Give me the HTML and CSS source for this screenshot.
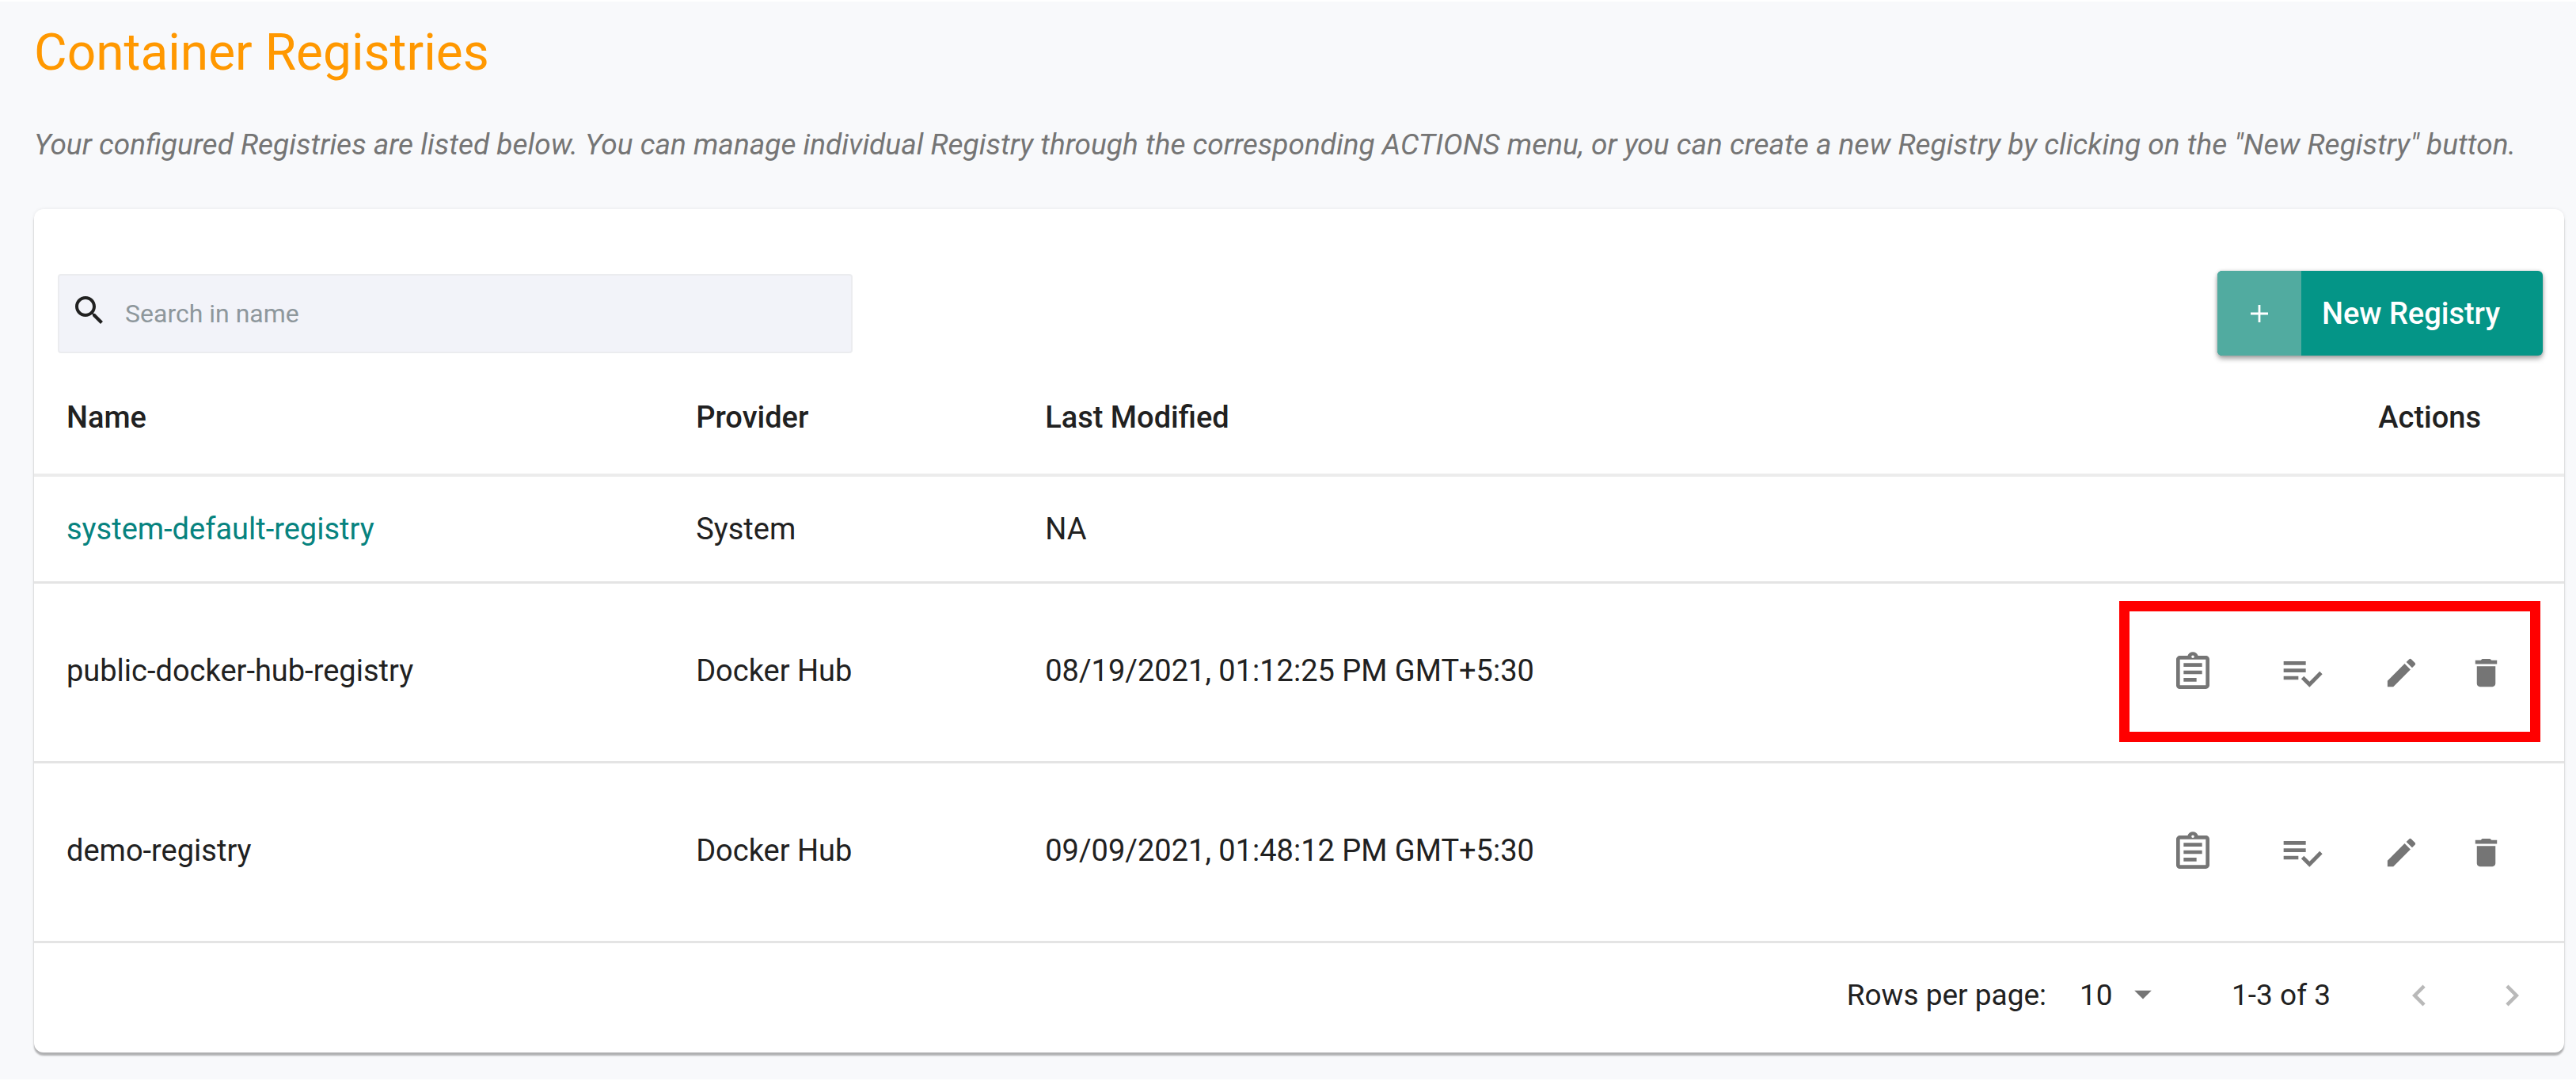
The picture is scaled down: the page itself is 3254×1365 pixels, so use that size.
FILE: index.html
```html
<!DOCTYPE html>
<html lang="en">
<head>
  <meta charset="UTF-8">
  <meta name="viewport" content="width=device-width, initial-scale=1.0">
  <title>Container Registries</title>
  <link rel="stylesheet" href="styles.css">
</head>
<body>

  <!-- icon sprite -->
  <svg class="sprite" aria-hidden="true">
    <symbol id="i-search" viewBox="0 0 24 24"><path d="M15.5 14h-.79l-.28-.27C15.41 12.59 16 11.11 16 9.5 16 5.91 13.09 3 9.5 3S3 5.91 3 9.5 5.91 16 9.5 16c1.61 0 3.09-.59 4.23-1.57l.27.28v.79l5 4.99L20.49 19l-4.99-5zm-6 0C7.01 14 5 11.99 5 9.5S7.01 5 9.5 5 14 7.01 14 9.5 11.99 14 9.5 14z"/></symbol>
    <symbol id="i-plus" viewBox="0 0 24 24"><path d="M10.6 1h2.8v9.6H23v2.8h-9.6V23h-2.8v-9.6H1v-2.8h9.6z"/></symbol>
    <symbol id="i-details" viewBox="0 0 24 24"><path d="M7 15h7v2H7zm0-4h10v2H7zm0-4h10v2H7zm12-4h-4.18C14.4 1.84 13.3 1 12 1c-1.3 0-2.4.84-2.82 2H5c-.14 0-.27.01-.4.04-.39.08-.74.28-1.01.55-.18.18-.33.4-.43.64-.1.23-.16.49-.16.77v14c0 .27.06.54.16.78s.25.45.43.64c.27.27.62.47 1.01.55.13.02.26.03.4.03h14c1.1 0 2-.9 2-2V5c0-1.1-.9-2-2-2zm-7-.25c.41 0 .75.34.75.75s-.34.75-.75.75-.75-.34-.75-.75.34-.75.75-.75zM19 19H5V5h14v14z"/></symbol>
    <symbol id="i-check" viewBox="0 0 24 24"><path d="M14 10H2v2h12v-2zm0-4H2v2h12V6zM2 16h8v-2H2v2zm19.5-4.5L23 13l-6.99 7-4.51-4.5L13 14l3.01 3 5.49-5.5z"/></symbol>
    <symbol id="i-edit" viewBox="0 0 24 24"><path d="M3 17.25V21h3.75L17.81 9.94l-3.75-3.75L3 17.25zM20.71 7.04c.39-.39.39-1.02 0-1.41l-2.34-2.34c-.39-.39-1.02-.39-1.41 0l-1.83 1.83 3.75 3.75 1.83-1.83z"/></symbol>
    <symbol id="i-delete" viewBox="0 0 24 24"><path d="M6 19c0 1.1.9 2 2 2h8c1.1 0 2-.9 2-2V7.8H6V19zM19 4h-3.5l-1-1h-5l-1 1H5v2.4h14V4z"/></symbol>
    <symbol id="i-prev" viewBox="0 0 24 24"><path d="M15.41 7.41L14 6l-6 6 6 6 1.41-1.41L10.83 12z"/></symbol>
    <symbol id="i-next" viewBox="0 0 24 24"><path d="M10 6L8.59 7.41 13.17 12l-4.58 4.59L10 18l6-6z"/></symbol>
    <symbol id="i-caret" viewBox="0 0 24 24"><path d="M7 10l5 5 5-5z"/></symbol>
  </svg>

  <main class="page">
    <h1 class="title">Container Registries</h1>
    <p class="subtitle">Your configured Registries are listed below. You can manage individual Registry through the corresponding ACTIONS menu, or you can create a new Registry by clicking on the "New Registry" button.</p>

    <section class="card">
      <div class="toolbar">
        <label class="search">
          <svg class="search-icon" aria-hidden="true"><use href="#i-search"/></svg>
          <input type="text" placeholder="Search in name" aria-label="Search in name">
        </label>
        <button type="button" class="btn-new">
          <span class="btn-plus"><svg aria-hidden="true"><use href="#i-plus"/></svg></span>
          <span class="btn-text">New Registry</span>
        </button>
      </div>

      <table class="registries">
        <thead>
          <tr>
            <th class="col-name">Name</th>
            <th class="col-provider">Provider</th>
            <th>Last Modified</th>
            <th class="col-actions">Actions</th>
          </tr>
        </thead>
        <tbody>
          <tr class="row-system">
            <td><a href="#">system-default-registry</a></td>
            <td>System</td>
            <td>NA</td>
            <td></td>
          </tr>
          <tr>
            <td>public-docker-hub-registry</td>
            <td>Docker Hub</td>
            <td>08/19/2021, 01:12:25 PM GMT+5:30</td>
            <td class="cell-actions">
              <div class="actions">
                <button type="button" class="icon-btn" aria-label="Details"><svg><use href="#i-details"/></svg></button>
                <button type="button" class="icon-btn" aria-label="Validate"><svg><use href="#i-check"/></svg></button>
                <button type="button" class="icon-btn edit" aria-label="Edit"><svg><use href="#i-edit"/></svg></button>
                <button type="button" class="icon-btn delete" aria-label="Delete"><svg><use href="#i-delete"/></svg></button>
              </div>
              <div class="highlight"></div>
            </td>
          </tr>
          <tr>
            <td>demo-registry</td>
            <td>Docker Hub</td>
            <td>09/09/2021, 01:48:12 PM GMT+5:30</td>
            <td class="cell-actions">
              <div class="actions">
                <button type="button" class="icon-btn" aria-label="Details"><svg><use href="#i-details"/></svg></button>
                <button type="button" class="icon-btn" aria-label="Validate"><svg><use href="#i-check"/></svg></button>
                <button type="button" class="icon-btn edit" aria-label="Edit"><svg><use href="#i-edit"/></svg></button>
                <button type="button" class="icon-btn delete" aria-label="Delete"><svg><use href="#i-delete"/></svg></button>
              </div>
            </td>
          </tr>
        </tbody>
      </table>

      <div class="pagination">
        <label for="rows">Rows per page:</label>
        <div class="rows-select">
          <select id="rows">
            <option>10</option>
            <option>25</option>
            <option>50</option>
          </select>
          <svg class="caret" aria-hidden="true"><use href="#i-caret"/></svg>
        </div>
        <span class="range">1-3 of 3</span>
        <button type="button" class="page-btn" aria-label="Previous page" disabled><svg><use href="#i-prev"/></svg></button>
        <button type="button" class="page-btn" aria-label="Next page" disabled><svg><use href="#i-next"/></svg></button>
      </div>
    </section>
  </main>

</body>
</html>
```
FILE: styles.css
```css
/* Base */
* { margin:0; padding:0; box-sizing:border-box; }
body {
  min-height:100vh;
  background:#f8f9fb;
  color:#212121;
  font-family:Roboto,sans-serif;
  font-size:37px;
  line-height:44px;
  border-top:2px solid #fff;
  border-bottom:2px solid #fff;
}
button, input, select { font:inherit; color:inherit; border:0; background:none; }
button { cursor:pointer; }
svg { display:block; fill:currentColor; }
.sprite { display:none; }

.page { padding:27px 15px 28px 43px; }

.title {
  color:#ff9800;
  font-size:64px; line-height:76px; font-weight:400;
  margin-bottom:56px;
}
.subtitle {
  color:#757575;
  font-size:37px; font-style:italic;
  margin-bottom:59px;
}

/* Card */
.card {
  background:#fff;
  border-radius:12px;
  box-shadow:0 4px 2px rgba(0,0,0,0.28), 0 0 4px rgba(0,0,0,0.08);
}
.toolbar {
  display:flex; justify-content:space-between; align-items:center;
  padding:78px 27px 6px 30px;
}

/* Search field */
.search {
  display:flex; align-items:center;
  width:1004px; height:100px;
  padding:0 20px 0 14px;
  background:#f2f3f9;
  border:2px solid #ebecef; border-radius:4px;
}
.search-icon { width:48px; height:48px; margin-right:21px; margin-bottom:8px; }
.search input { flex:1; font-size:32px; outline:none; }
.search input::placeholder { color:#8e979c; opacity:1; }

/* New registry button */
.btn-new {
  display:flex; align-items:stretch;
  height:107px;
  border-radius:6px; overflow:hidden;
  background:#049587; color:#fff;
  font-size:38px; font-weight:500;
  box-shadow:0 4px 6px rgba(0,0,0,0.35), 0 0 4px rgba(0,0,0,0.15);
}
.btn-plus {
  display:flex; align-items:center; justify-content:center;
  width:106px;
  background:#51aba0;
}
.btn-plus svg { width:24px; height:24px; }
.btn-text { padding:0 54px 0 26px; align-self:center; }

/* Table */
.registries { width:100%; border-collapse:separate; border-spacing:0; font-size:38px; }
.registries th {
  height:147px;
  padding:0 41px;
  text-align:left; font-weight:500;
  border-bottom:4px solid #ececec;
}
.registries td {
  height:227px;
  padding:0 41px 4px;
  border-bottom:3px solid #e4e4e4;
}
.registries .row-system td { height:135px; padding-bottom:0; }
.registries a { color:#07837f; text-decoration:none; }
.col-name { width:24.88%; }
.col-provider { width:13.8%; }
.registries .col-actions { text-align:right; padding-right:105px; }
.registries .cell-actions { position:relative; padding:0 48px 0 0; }

.actions { display:flex; justify-content:flex-end; color:#757575; }
.icon-btn {
  display:flex; align-items:center; justify-content:center;
  width:138px; height:112px;
}
.icon-btn svg { width:56px; height:56px; }
.icon-btn.edit { width:112px; }
.icon-btn.delete { width:102px; }
.icon-btn.edit svg, .icon-btn.delete svg { width:47px; height:47px; }

/* Marker frame over the row actions */
.highlight {
  position:absolute;
  top:22px; right:30px; bottom:24px;
  width:532px;
  border:13px solid #f00;
  pointer-events:none;
}

/* Pagination */
.pagination {
  display:flex; align-items:center; justify-content:flex-end;
  height:138px;
  padding:0 8px 6px 0;
}
.rows-select { position:relative; margin:0 98px 0 42px; }
.rows-select select { width:94px; appearance:none; outline:none; }
.caret {
  position:absolute; top:-6px; right:-12px;
  width:52px; height:52px;
  color:#757575; pointer-events:none;
}
.range { margin-right:53px; }
.page-btn {
  display:flex; align-items:center; justify-content:center;
  width:117px; height:112px;
  color:#b9b9b9;
}
.page-btn svg { width:54px; height:54px; }
```
